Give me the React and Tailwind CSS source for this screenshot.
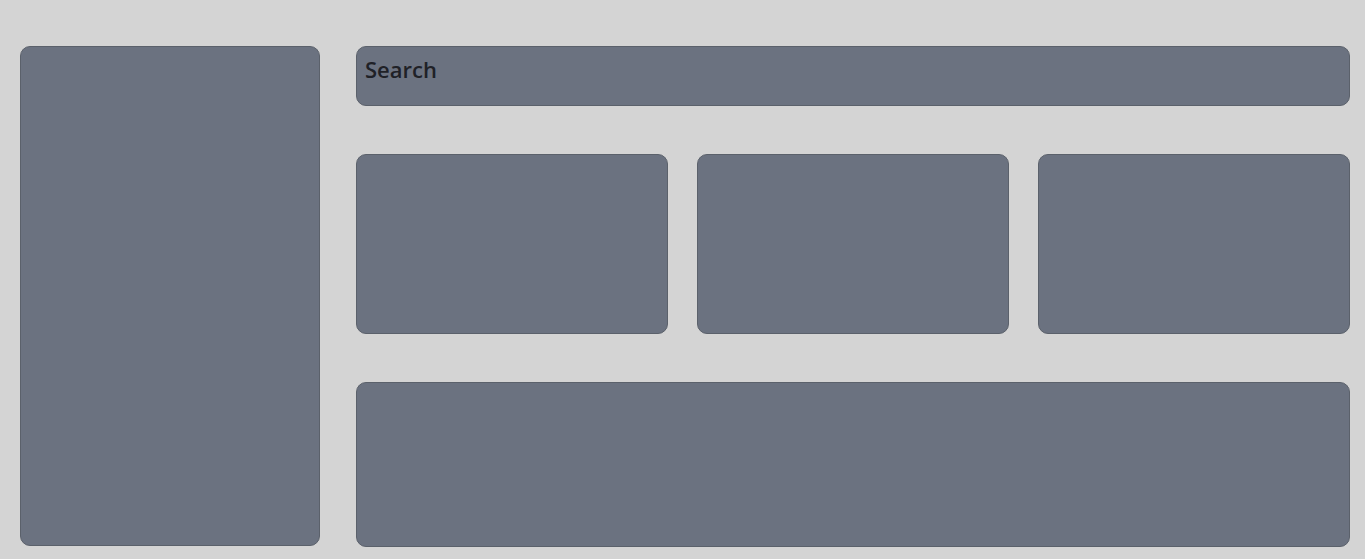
export default function App() {
  return (
    <div className="min-h-[559px] bg-[#d4d4d4] pt-[46px] pl-[20px] pr-[15px] flex gap-[36px]" style={{ fontFamily: '"Open Sans", sans-serif' }}>
      <aside className="w-[300px] h-[500px] shrink-0 rounded-[10px] bg-[#6b7280] border border-[#5b616b]" />
      <main className="flex-1 flex flex-col">
        <div className="h-[60px] rounded-[10px] bg-[#6b7280] border border-[#5b616b] px-2 flex items-center pb-[13px]">
          <span className="text-[22px] font-semibold text-[#1f2127]">Search</span>
        </div>
        <div className="mt-[48px] grid grid-cols-3 gap-x-[29.5px]">
          <div className="h-[180px] rounded-[10px] bg-[#6b7280] border border-[#5b616b]" />
          <div className="h-[180px] rounded-[10px] bg-[#6b7280] border border-[#5b616b]" />
          <div className="h-[180px] rounded-[10px] bg-[#6b7280] border border-[#5b616b]" />
        </div>
        <div className="mt-[48px] h-[165px] rounded-[10px] bg-[#6b7280] border border-[#5b616b]" />
      </main>
    </div>
  );
}
